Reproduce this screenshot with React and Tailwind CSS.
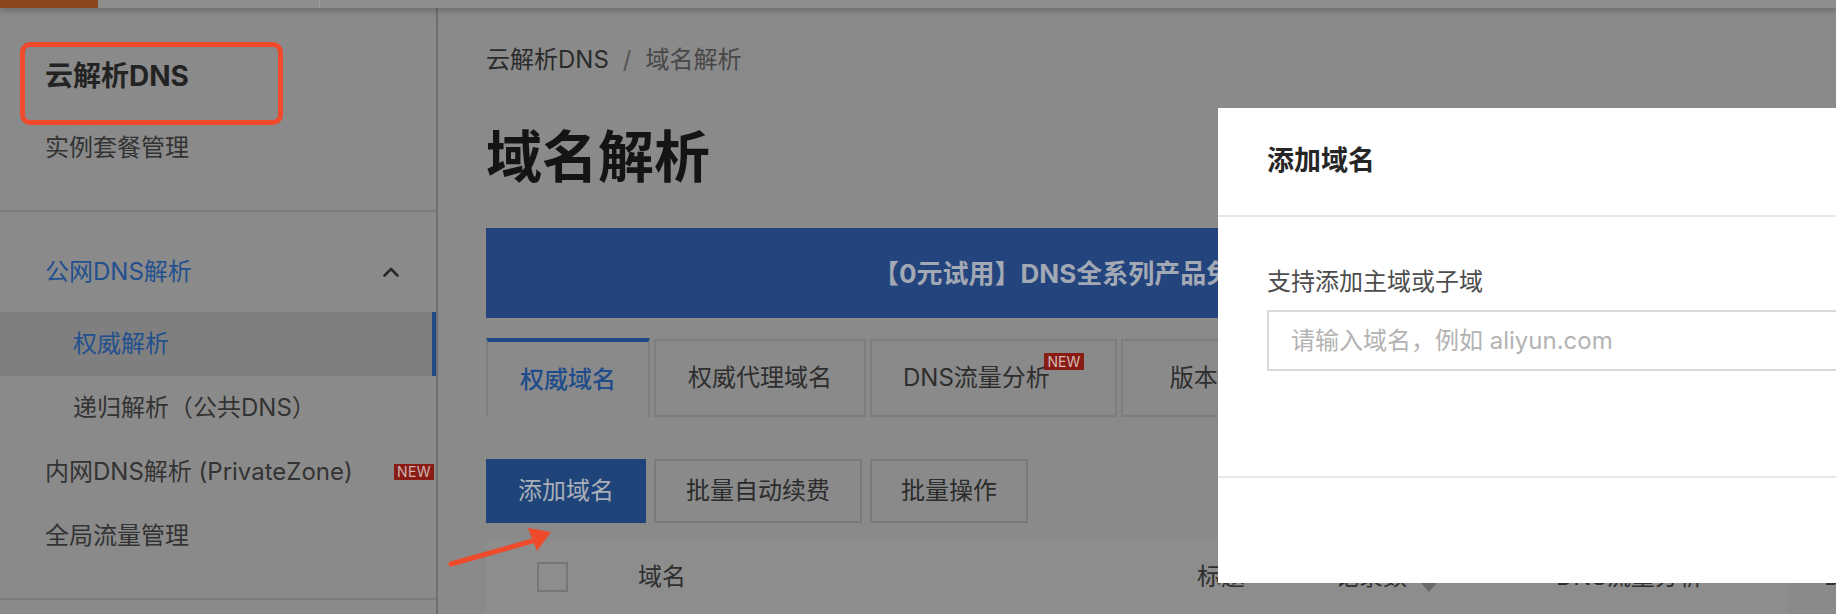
import React from "react";

const sideText = "text-[24px] leading-8 text-[#333333]";

const SideNew = () => (
  <span className="flex h-4 w-10 items-center justify-center bg-[#8a1c16] text-[14px] leading-4 tracking-wide text-[#cdb4b2]">
    NEW
  </span>
);

const Sidebar = () => {
  return (
    <aside className="w-[438px] shrink-0 border-r-2 border-[#6f6f6f]">
      {/* product title + instance link */}
      <div className="border-b-2 border-[#7c7c7c] pt-9 pb-[30px]">
        <div className="flex h-16 items-center pl-[45px] text-[28px] font-bold text-[#232323]">云解析DNS</div>
        <div className={`mt-2 flex h-16 items-center pl-[45px] ${sideText} text-[#3a3a3a]`}>实例套餐管理</div>
      </div>

      {/* nav groups */}
      <div className="border-b-2 border-[#7c7c7c] pt-7 pb-[30px]">
        <div className="flex h-16 items-center justify-between pl-[45px] pr-[37px]">
          <span className="text-[24px] leading-8 text-[#22508f]">公网DNS解析</span>
          <svg width="16" height="10" viewBox="0 0 16 10" fill="none">
            <polyline points="1.5,8.5 8,2 14.5,8.5" stroke="#2a2a2a" strokeWidth="2.6" strokeLinecap="round" strokeLinejoin="round" />
          </svg>
        </div>
        <div className="mt-2 flex h-16 items-center border-r-4 border-[#1f4a86] bg-[#7f7f7f] pl-[73px]">
          <span className="text-[24px] leading-8 text-[#22508f]">权威解析</span>
        </div>
        <div className={`flex h-16 items-center pl-[73px] ${sideText}`}>递归解析（公共DNS）</div>
        <div className="flex h-16 items-center justify-between pl-[45px] pr-[2px]">
          <span className={sideText}>内网DNS解析 (PrivateZone)</span>
          <SideNew />
        </div>
        <div className={`flex h-16 items-center pl-[45px] ${sideText}`}>全局流量管理</div>
      </div>
    </aside>
  );
};

const tabs = [
  { label: "权威域名", active: true },
  { label: "权威代理域名", pad: "px-[32px]" },
  { label: "DNS流量分析", badge: true, pad: "pl-[31px] pr-[65px]" },
  { label: "版本管理", pad: "px-[47px]" },
];

const Tabs = () => (
  <div className="mt-5 flex h-[79px] items-end gap-1">
    {tabs.map((t) =>
      t.active ? (
        <div
          key={t.label}
          className="flex h-[79px] w-[164px] shrink-0 items-center justify-center border-x-2 border-t-4 border-x-[#7f7f7f] border-t-[#1f4a86] text-[24px] font-medium text-[#1f4c8a]"
        >
          {t.label}
        </div>
      ) : (
        <div
          key={t.label}
          className={`relative flex h-[78px] shrink-0 items-center border-2 border-[#7d7d7d] text-[24px] text-[#2e2e2e] ${t.pad}`}
        >
          {t.label}
          {t.badge && (
            <span className="absolute right-[31px] top-[12px] flex h-[17px] w-10 items-center justify-center bg-[#8a1c16] text-[14px] leading-4 text-[#d2b9b7]">
              NEW
            </span>
          )}
        </div>
      )
    )}
  </div>
);

const Toolbar = () => (
  <div className="mt-[42px] flex h-16 gap-2">
    <button className="h-16 w-[160px] bg-[#1e4479] text-[24px] text-[#a9aeb7]">添加域名</button>
    <button className="h-16 border-2 border-[#7a7a7a] px-[30px] text-[24px] text-[#2c2c2c]">批量自动续费</button>
    <button className="h-16 border-2 border-[#7a7a7a] px-[29px] text-[24px] text-[#2c2c2c]">批量操作</button>
  </div>
);

const TableHead = () => (
  <div className="mt-[17px] flex h-20 items-center bg-[#8d8d8d] text-[24px] text-[#2f2f2f]">
    <span className="ml-[51px] h-[30px] w-[31px] shrink-0 border-2 border-[#767676]" />
    <span className="ml-[70px] w-[559px] shrink-0">域名</span>
    <span className="w-[138px] shrink-0">标题</span>
    <span className="flex w-[221px] shrink-0 items-center">
      记录数
      <svg className="ml-[14px] mt-5" width="16" height="9" viewBox="0 0 16 9">
        <polygon points="0,0 16,0 8,9" fill="#6a6a6a" />
      </svg>
    </span>
    <span className="w-[268px] shrink-0">DNS流量分析</span>
    <span className="shrink-0">DNS</span>
  </div>
);

const AddDomainModal = () => (
  <div className="absolute left-[1218px] top-[108px] flex h-[475px] w-[700px] flex-col bg-white">
    <div className="flex h-[109px] items-center border-b-2 border-[#e3e8ee] px-[49px]">
      <h3 className="text-[27px] font-bold text-[#262626]">添加域名</h3>
    </div>
    <div className="h-[261px] border-b-2 border-[#e3e8ee] px-[49px] pt-[49px]">
      <p className="text-[24px] leading-8 text-[#4d4d4d]">支持添加主域或子域</p>
      <input
        className="mt-3 h-[61px] w-full border-2 border-[#d9d9d9] pl-[22px] text-[24px] outline-none placeholder:text-[#b3b3b3]"
        placeholder="请输入域名，例如 aliyun.com"
      />
    </div>
    <div className="flex-1" />
  </div>
);

const App = () => {
  return (
    <div className="relative h-[614px] w-[1836px] overflow-hidden bg-[#8a8a8a] font-['Inter','Noto_Sans_CJK_SC',sans-serif]">
      {/* top console bar */}
      <div className="relative z-10 flex h-2 bg-[#8e8e8e] shadow-[0_3px_6px_rgba(0,0,0,0.22)]">
        <div className="w-[98px] bg-[#8c4721]" />
        <div className="w-[222px] border-r border-[#9b9b9b]" />
      </div>

      <div className="flex h-[606px]">
        <Sidebar />

        <main className="flex min-w-0 flex-1 flex-col pl-12 pr-12">
          <div className="mt-9 flex h-8 items-center text-[24px] text-[#2b2b2b]">
            <span>云解析DNS</span>
            <span className="mx-[14px] text-[#555555]">/</span>
            <span className="text-[#484848]">域名解析</span>
          </div>

          <h1 className="mt-[49px] text-[56px] font-bold leading-[64px] text-[#141414]">域名解析</h1>

          <div className="mt-[39px] flex h-[90px] shrink-0 items-center bg-[#23447c] pl-[387px]">
            <span className="whitespace-nowrap text-[26px] font-bold text-[#a3a9b4]">【0元试用】DNS全系列产品免费试用</span>
          </div>

          <Tabs />
          <Toolbar />
          <TableHead />
        </main>
      </div>

      {/* dialog over the dimmed page */}
      <AddDomainModal />

      {/* screenshot annotations */}
      <div className="absolute left-[20px] top-[42px] h-[83px] w-[263px] rounded-[10px] border-[5px] border-[#ee4a2b]" />
      <svg className="absolute left-[440px] top-[520px]" width="120" height="50" viewBox="0 0 120 50">
        <line x1="11" y1="44" x2="96" y2="20" stroke="#ee4a2b" strokeWidth="5" strokeLinecap="round" />
        <polygon points="111,12 88,8 97,31" fill="#ee4a2b" />
      </svg>
    </div>
  );
};

export default App;
